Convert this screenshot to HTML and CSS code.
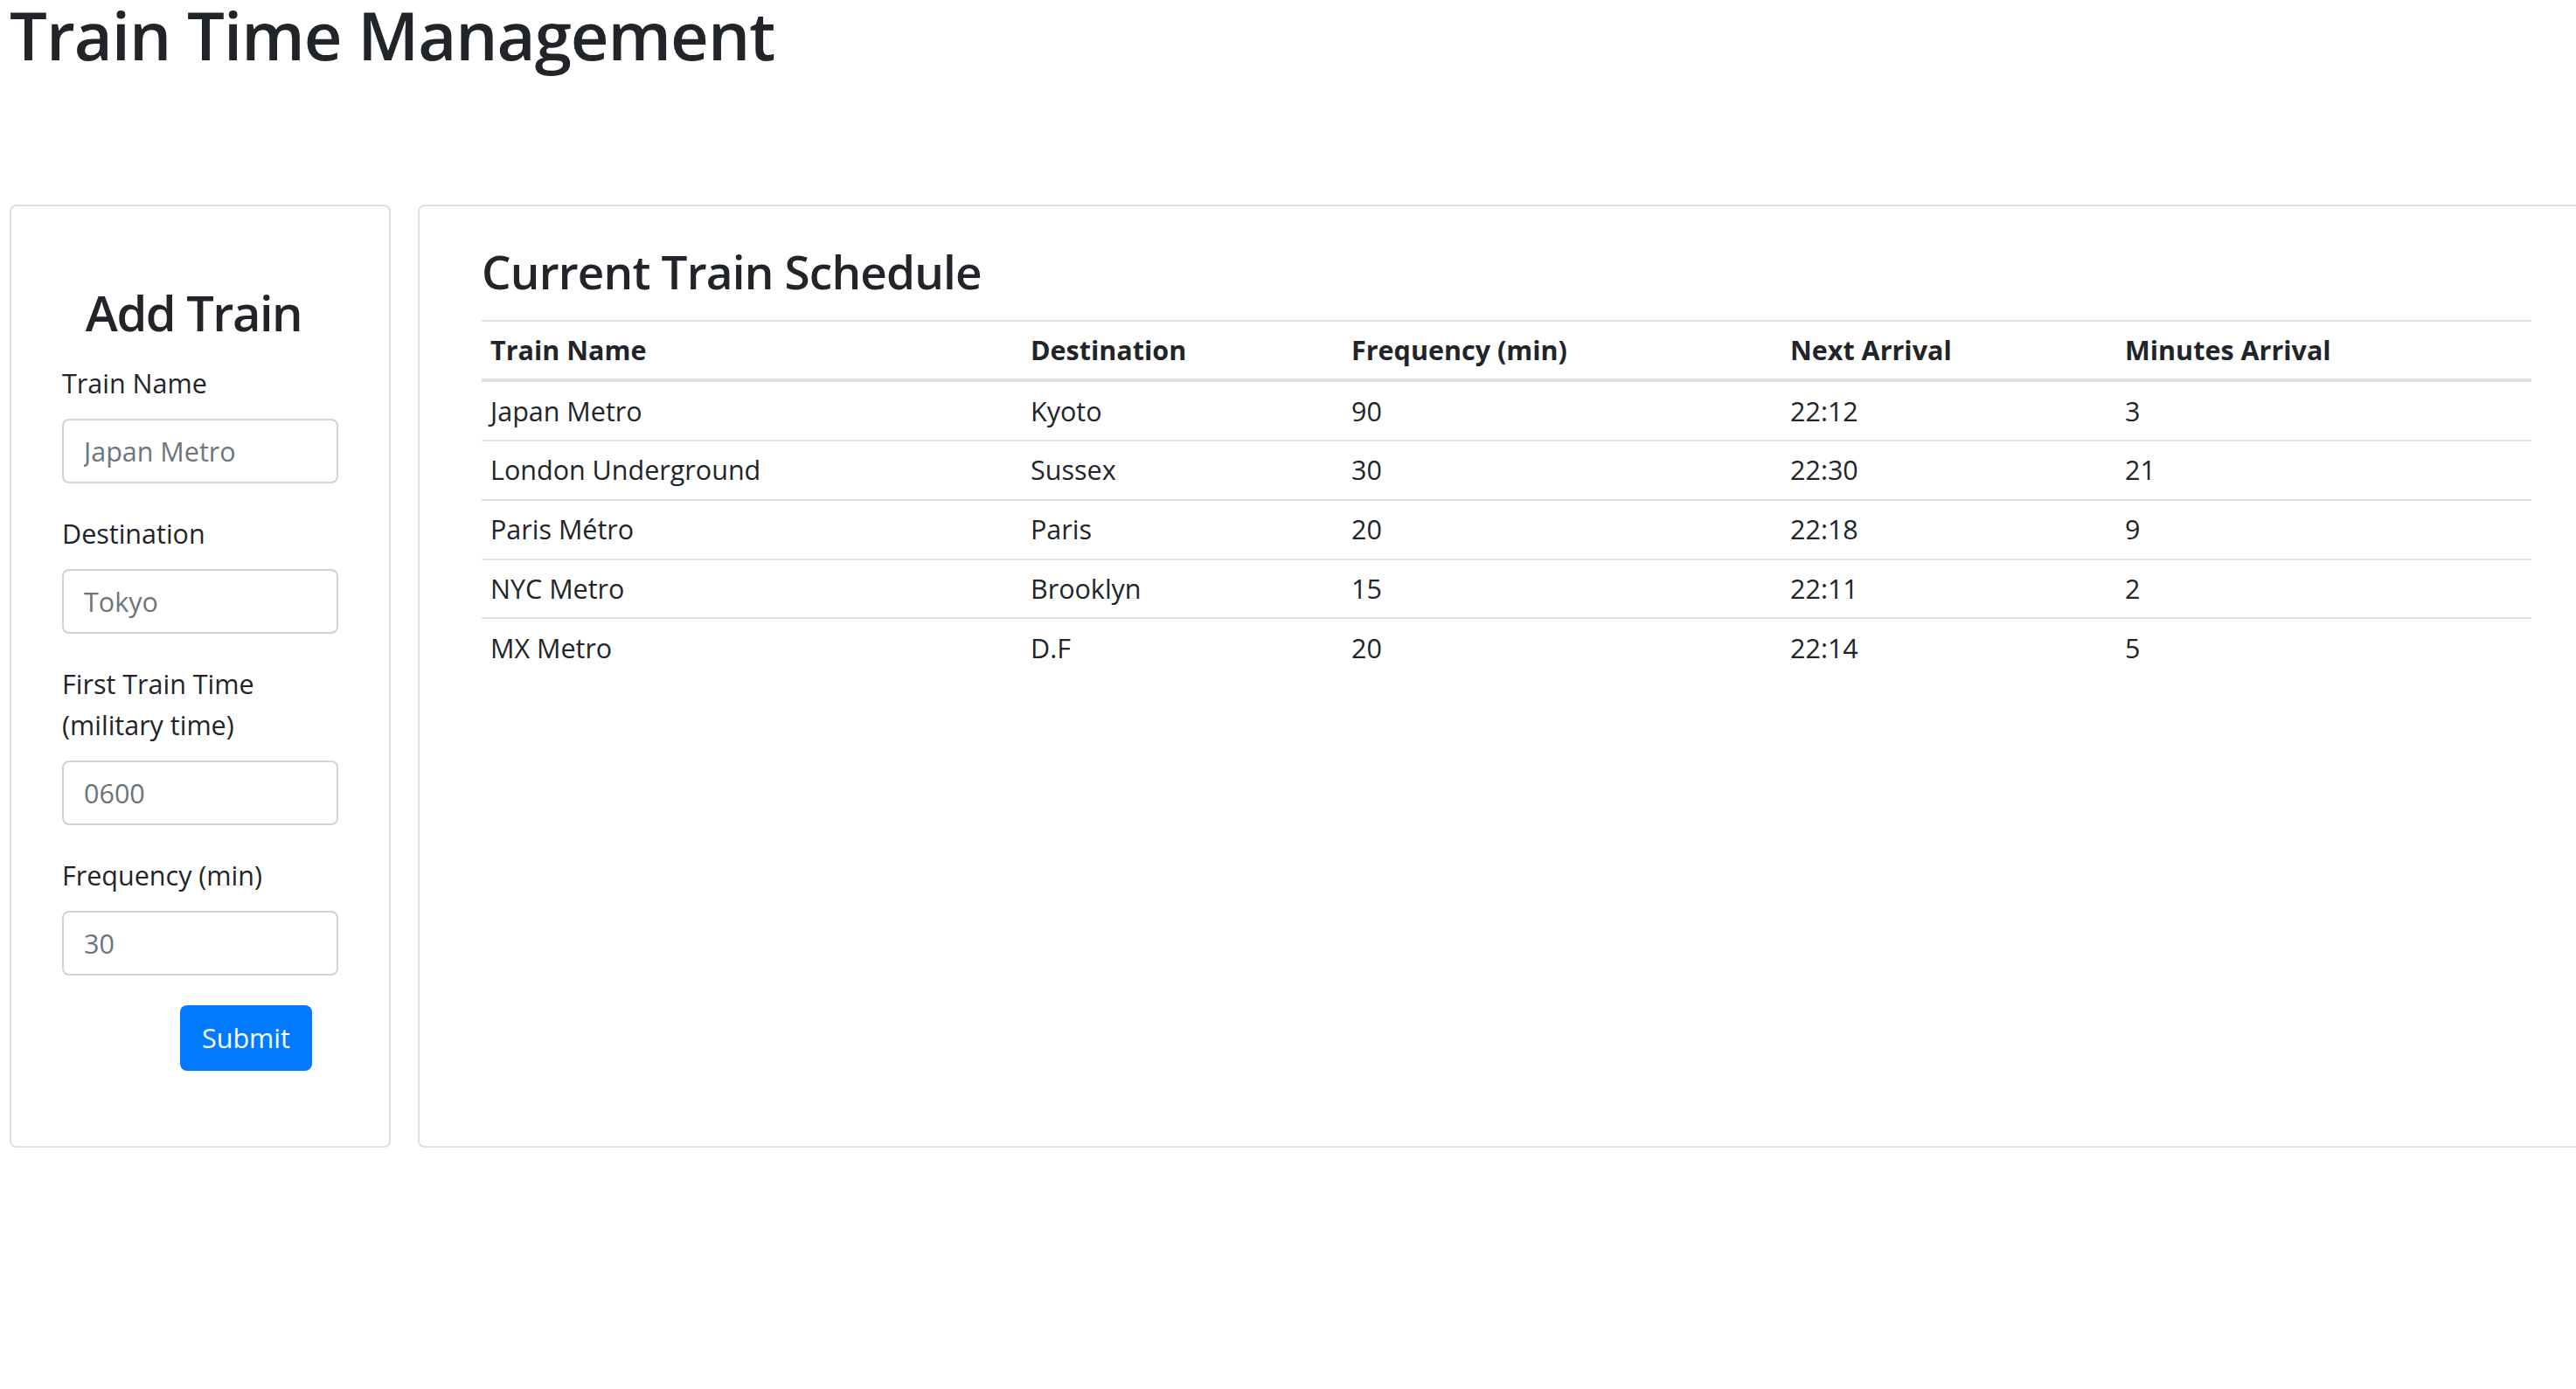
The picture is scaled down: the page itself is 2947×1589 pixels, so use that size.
FILE: index.html
```html
<!DOCTYPE html>
<html lang="en">
<head>
<meta charset="utf-8">
<title>Train Time Management</title>
<link rel="stylesheet" href="styles.css">
</head>
<body>
<div class="page">
  <h1 class="title">Train Time Management</h1>
  <div class="main">
    <div class="card add-card">
      <h2 class="add-title">Add Train</h2>
      <form class="add-form">
        <div class="form-group">
          <label class="form-label">Train Name</label>
          <input class="form-input" type="text" placeholder="Japan Metro">
        </div>
        <div class="form-group">
          <label class="form-label">Destination</label>
          <input class="form-input" type="text" placeholder="Tokyo">
        </div>
        <div class="form-group">
          <label class="form-label">First Train Time (military time)</label>
          <input class="form-input" type="text" placeholder="0600">
        </div>
        <div class="form-group">
          <label class="form-label">Frequency (min)</label>
          <input class="form-input" type="text" placeholder="30">
        </div>
        <button class="btn-submit" type="button">Submit</button>
      </form>
    </div>
    <div class="card schedule-card">
      <h3 class="schedule-title">Current Train Schedule</h3>
      <table class="schedule">
        <thead>
          <tr>
            <th class="c1">Train Name</th>
            <th class="c2">Destination</th>
            <th class="c3">Frequency (min)</th>
            <th class="c4">Next Arrival</th>
            <th class="c5">Minutes Arrival</th>
          </tr>
        </thead>
        <tbody>
          <tr><td>Japan Metro</td><td>Kyoto</td><td>90</td><td>22:12</td><td>3</td></tr>
          <tr><td>London Underground</td><td>Sussex</td><td>30</td><td>22:30</td><td>21</td></tr>
          <tr><td>Paris Métro</td><td>Paris</td><td>20</td><td>22:18</td><td>9</td></tr>
          <tr><td>NYC Metro</td><td>Brooklyn</td><td>15</td><td>22:11</td><td>2</td></tr>
          <tr><td>MX Metro</td><td>D.F</td><td>20</td><td>22:14</td><td>5</td></tr>
        </tbody>
      </table>
    </div>
  </div>
</div>
</body>
</html>
```
FILE: styles.css
```css
html, body {
  margin: 0;
  padding: 0;
  overflow: hidden;
  background: #ffffff;
}

body {
  font-family: "Open Sans", "Noto Sans", sans-serif;
  font-size: 30.5px;
  line-height: 47px;
  color: #212529;
}

.page {
  padding-left: 11px;
}

.title {
  margin: 0;
  font-size: 76px;
  line-height: 80px;
  font-weight: 600;
  letter-spacing: -1px;
  color: #212529;
  white-space: nowrap;
}

.main {
  display: flex;
  align-items: stretch;
  gap: 31px;
  margin-top: 154px;
}

.card {
  box-sizing: border-box;
  border: 2px solid #dfdfdf;
  border-radius: 8px;
  background: #fff;
  flex-shrink: 0;
}

.add-card {
  width: 436px;
  padding: 84px 58px 86px;
}

.add-title {
  margin: 0 15px 21px 0;
  font-size: 56px;
  line-height: 74px;
  font-weight: 600;
  letter-spacing: -1.5px;
  text-align: center;
  white-space: nowrap;
}

.add-form {
  display: flex;
  flex-direction: column;
  align-items: flex-start;
}

.form-group {
  width: 100%;
  margin-bottom: 34px;
}

.form-label {
  display: block;
  margin-bottom: 17px;
}

.form-input {
  display: block;
  box-sizing: border-box;
  width: 100%;
  height: 74px;
  padding: 0 23px;
  border: 2px solid #ced4da;
  border-radius: 8px;
  font-family: inherit;
  font-size: 30.5px;
  color: #495057;
  background: #fff;
  outline: none;
}

.form-input::placeholder {
  color: #6c757d;
  opacity: 1;
}

.btn-submit {
  margin-left: 135px;
  height: 75px;
  padding: 0 25px;
  border: none;
  border-radius: 8px;
  background: #007bff;
  color: #fff;
  font-family: inherit;
  font-size: 30.5px;
  line-height: 47px;
}

.schedule-card {
  width: 2491px;
  padding: 42px 71px;
}

.schedule-title {
  margin: 0 0 22px;
  font-size: 53px;
  line-height: 65.5px;
  font-weight: 600;
  letter-spacing: -0.8px;
  white-space: nowrap;
}

.schedule {
  width: 100%;
  border-collapse: collapse;
  table-layout: fixed;
}

.schedule th,
.schedule td {
  padding: 9.4px 10px;
  border-top: 2px solid #dee2e6;
  text-align: left;
  vertical-align: top;
  white-space: nowrap;
}

.schedule thead th {
  border-bottom: 4px solid #dee2e6;
  font-weight: 700;
}

.c1 { width: 598px; }
.c2 { width: 347px; }
.c3 { width: 482px; }
.c4 { width: 363px; }
.c5 { width: auto; }
```
